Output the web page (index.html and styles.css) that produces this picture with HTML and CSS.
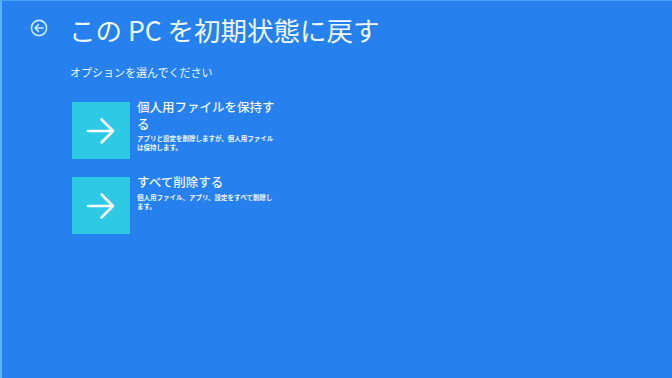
FILE: index.html
```html
<!DOCTYPE html>
<html lang="ja">
<head>
<meta charset="utf-8">
<link rel="stylesheet" href="styles.css">
</head>
<body>
<div class="screen">
  <header class="header">
    <svg class="back" width="18" height="18" viewBox="0 0 18 18">
      <circle cx="9" cy="9" r="7.6" fill="none" stroke="#c6ecff" stroke-width="1.6"/>
      <path d="M13 9H5.2M8.4 5.6L5 9l3.4 3.4" fill="none" stroke="#c6ecff" stroke-width="1.6" stroke-linecap="round" stroke-linejoin="round"/>
    </svg>
    <h1 class="title">この PC を初期状態に戻す</h1>
  </header>
  <main class="content">
    <p class="subtitle">オプションを選んでください</p>
    <div class="options">
      <div class="option">
        <div class="tile">
          <svg width="30" height="28" viewBox="0 0 30 28">
            <path d="M2 14H27M15.5 2.5L27 14 15.5 25.5" fill="none" stroke="#ffffff" stroke-width="2.6" stroke-linecap="round" stroke-linejoin="round"/>
          </svg>
        </div>
        <div class="text">
          <div class="opt-title">個人用ファイルを保持する</div>
          <div class="opt-desc">アプリと設定を削除しますが、個人用ファイルは保持します。</div>
        </div>
      </div>
      <div class="option">
        <div class="tile">
          <svg width="30" height="28" viewBox="0 0 30 28">
            <path d="M2 14H27M15.5 2.5L27 14 15.5 25.5" fill="none" stroke="#ffffff" stroke-width="2.6" stroke-linecap="round" stroke-linejoin="round"/>
          </svg>
        </div>
        <div class="text">
          <div class="opt-title">すべて削除する</div>
          <div class="opt-desc">個人用ファイル、アプリ、設定をすべて削除します。</div>
        </div>
      </div>
    </div>
  </main>
</div>
</body>
</html>
```
FILE: styles.css
```css
* { box-sizing: border-box; }
html, body {
  margin: 0;
  padding: 0;
  width: 672px;
  height: 378px;
  overflow: hidden;
}
body {
  background: #2680ee;
  font-family: "Noto Sans CJK JP", "Noto Sans", sans-serif;
  color: #eef8ff;
}
.screen {
  width: 672px;
  height: 378px;
  border-left: 2px solid #58b4f6;
  border-top: 1px solid #4a9ef3;
  padding: 11px 0 0 28px;
}
.header {
  display: flex;
  align-items: center;
  gap: 21px;
  height: 36px;
}
.back {
  display: block;
  margin-top: -4px;
}
.title {
  margin: 0;
  font-size: 26.5px;
  font-weight: 400;
  line-height: 36px;
  white-space: nowrap;
}
.content {
  padding-left: 40px;
}
.subtitle {
  margin: 16px 0 0 0;
  font-size: 11px;
  line-height: 16px;
  font-weight: 400;
}
.options {
  display: flex;
  flex-direction: column;
  gap: 18px;
  margin-top: 22px;
  padding-left: 2px;
}
.option {
  display: flex;
  align-items: flex-start;
  gap: 7px;
}
.tile {
  width: 58px;
  height: 57px;
  background: #2ec9e5;
  display: flex;
  align-items: center;
  justify-content: center;
  flex: none;
}
.tile svg { display: block; }
.text {
  width: 141px;
  margin-top: -3px;
}
.opt-title {
  font-size: 12.5px;
  line-height: 16.5px;
  font-weight: 500;
}
.opt-desc {
  margin-top: 2px;
  font-size: 6.5px;
  line-height: 9px;
  font-weight: 700;
}
```
